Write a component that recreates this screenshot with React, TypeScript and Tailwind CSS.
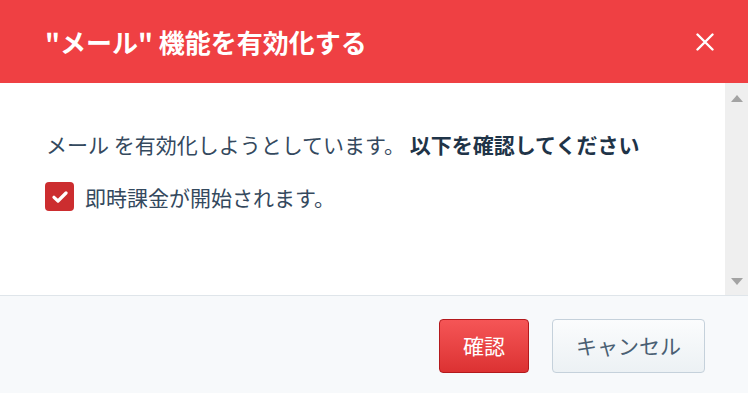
const font = { fontFamily: '"Noto Sans CJK JP", "Noto Sans", sans-serif' };

function ScrollArrow({ up }: { up: boolean }) {
	return (
		<svg width="12" height="7" viewBox="0 0 12 7" className="text-[#a3a3a3]">
			<path d={up ? "M6 0 L12 7 L0 7 Z" : "M0 0 L12 0 L6 7 Z"} fill="currentColor" />
		</svg>
	);
}

export default function App() {
	return (
		<div className="flex h-[393px] w-[748px] flex-col bg-white" style={font}>
			<div className="flex h-[83px] shrink-0 items-center justify-between bg-[#ef4043] pl-[45px] pr-[34px]">
				<h1 className="text-[26px] font-bold leading-none text-white">
					"メール" 機能を有効化する
				</h1>
				<svg width="18" height="18" viewBox="0 0 18 18">
					<path
						d="M1.5 1.5 L16.5 16.5 M16.5 1.5 L1.5 16.5"
						stroke="white"
						strokeWidth="2.4"
						strokeLinecap="round"
					/>
				</svg>
			</div>
			<div className="flex h-[212px] shrink-0">
				<div className="flex-1 pl-[46px] pt-[47px]">
					<p className="text-[21px] leading-[28px] text-[#34495e]">
						メール を有効化しようとしています。{" "}
						<span className="font-bold text-[#1f3448]">以下を確認してください</span>
					</p>
					<label className="mt-[24px] flex items-center gap-[11px] text-[21px] leading-[28px] text-[#34495e]">
						<span className="-ml-px flex size-[29px] items-center justify-center rounded-[4px] bg-[#cc2d2f]">
							<svg width="16" height="12" viewBox="0 0 16 12">
								<path
									d="M2 6.3 L6 10 L14 2"
									fill="none"
									stroke="white"
									strokeWidth="3.2"
									strokeLinecap="round"
									strokeLinejoin="round"
								/>
							</svg>
						</span>
						即時課金が開始されます。
					</label>
				</div>
				<div className="flex w-[23px] flex-col items-center justify-between bg-[#efefef] pb-[10px] pt-[12px]">
					<ScrollArrow up />
					<ScrollArrow up={false} />
				</div>
			</div>
			<div className="flex flex-1 items-start justify-end gap-[23px] border-t border-[#dfe5ea] bg-[#f7f9fb] pr-[43px] pt-[23px]">
				<button
					type="button"
					className="h-[54px] w-[90px] rounded-[4px] border border-[#b3191c] bg-gradient-to-b from-[#f55556] to-[#dc3132] text-[21px] text-white"
				>
					確認
				</button>
				<button
					type="button"
					className="h-[54px] w-[153px] rounded-[4px] border border-[#c5d1db] bg-gradient-to-b from-[#fbfcfd] to-[#ecf1f4] text-[21px] text-[#4a5f73]"
				>
					キャンセル
				</button>
			</div>
		</div>
	);
}
